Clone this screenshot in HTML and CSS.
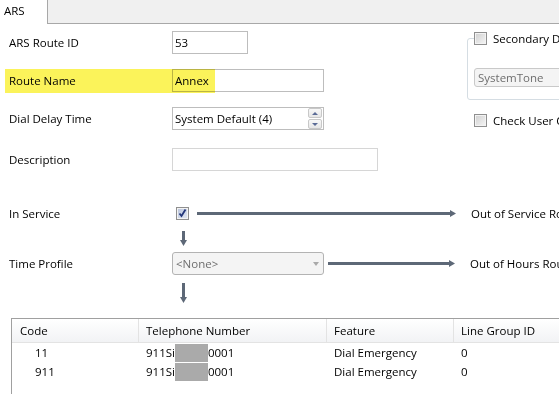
FILE: index.html
```html
<!DOCTYPE html>
<html lang="en">
<head>
    <meta charset="UTF-8">
    <title>ARS Route</title>
    <link rel="stylesheet" href="styles.css">
</head>
<body>
    <div class="tabs">
        <div class="tab">ARS</div>
        <div class="tab-rest"></div>
    </div>

    <div class="page">
        <div class="top">
            <div class="fields">
                <div class="row">
                    <span class="label">ARS Route ID</span>
                    <div class="box w-id">53</div>
                </div>

                <div class="row gap-15">
                    <span class="label">Route Name</span>
                    <div class="box w-name">Annex</div>
                    <span class="marker"></span>
                </div>

                <div class="row gap-15">
                    <span class="label">Dial Delay Time</span>
                    <div class="box w-name spin">
                        <span>System Default (4)</span>
                        <div class="spin-btns">
                            <span class="spin-btn up"></span>
                            <span class="spin-btn down"></span>
                        </div>
                    </div>
                </div>

                <div class="row gap-18">
                    <span class="label">Description</span>
                    <div class="box w-desc light"></div>
                </div>
            </div>

            <div class="side">
                <fieldset class="group">
                    <legend class="check-line"><span class="cb"></span>Secondary D</legend>
                    <div class="select small">SystemTone</div>
                </fieldset>
                <div class="check-line user-check"><span class="cb"></span>Check User C</div>
            </div>
        </div>

        <div class="flow">
            <div class="row">
                <span class="label">In Service</span>
                <span class="cb checked">
                    <svg width="11" height="11" viewBox="0 0 11 11"><path d="M2.5 5.5 L4.5 8 L8.5 1.5" fill="none" stroke="#23367a" stroke-width="1.8"/></svg>
                </span>
                <svg class="harrow long" width="259" height="9" viewBox="0 0 259 9"><rect x="0" y="3" width="254" height="3" fill="#5d6877"/><polygon points="253,1 259,4.5 253,8" fill="#5d6877"/></svg>
                <span class="target">Out of Service Ro</span>
            </div>

            <div class="varrow first">
                <svg width="7" height="15" viewBox="0 0 7 15"><rect x="2" y="0" width="3" height="10" fill="#5d6877"/><polygon points="0,9 7,9 3.5,15" fill="#5d6877"/></svg>
            </div>

            <div class="row gap-6">
                <span class="label">Time Profile</span>
                <div class="select w-name">&lt;None&gt;<span class="caret"></span></div>
                <svg class="harrow short" width="127" height="9" viewBox="0 0 127 9"><rect x="0" y="3" width="122" height="3" fill="#5d6877"/><polygon points="121,1 127,4.5 121,8" fill="#5d6877"/></svg>
                <span class="target">Out of Hours Rou</span>
            </div>

            <div class="varrow second">
                <svg width="7" height="20" viewBox="0 0 7 20"><rect x="2" y="0" width="3" height="15" fill="#5d6877"/><polygon points="0,14 7,14 3.5,20" fill="#5d6877"/></svg>
            </div>
        </div>

        <div class="grid">
            <div class="grid-head">
                <div class="c-code">Code</div>
                <div class="c-tel">Telephone Number</div>
                <div class="c-feat">Feature</div>
                <div class="c-line">Line Group ID</div>
            </div>
            <div class="grid-row">
                <div class="c-code num">11</div>
                <div class="c-tel">911Si<span class="hidden"></span>0001</div>
                <div class="c-feat">Dial Emergency</div>
                <div class="c-line">0</div>
            </div>
            <div class="grid-row">
                <div class="c-code num">911</div>
                <div class="c-tel">911Si<span class="hidden"></span>0001</div>
                <div class="c-feat">Dial Emergency</div>
                <div class="c-line">0</div>
            </div>
        </div>
    </div>
</body>
</html>
```

FILE: styles.css
```css
* {
    margin: 0;
    padding: 0;
    box-sizing: border-box;
}

body {
    width: 559px;
    height: 394px;
    overflow: hidden;
    background: #fff;
    color: #000;
    font-family: "Open Sans", "Noto Sans", sans-serif;
    font-size: 11.5px;
    white-space: nowrap;
}

.tabs {
    display: flex;
    height: 24px;
}

.tab {
    width: 47px;
    padding: 3px 0 0 4px;
    background: #fff;
}

.tab-rest {
    flex: 1;
    background: #f0f0f0;
    border-left: 1px solid #a8a8a8;
    border-bottom: 1px solid #a8a8a8;
}

.page {
    padding-left: 9px;
    overflow: hidden;
}

.top {
    display: flex;
}

.fields {
    width: 458px;
    flex-shrink: 0;
    padding-top: 7px;
}

.row {
    display: flex;
    align-items: center;
    height: 23px;
    position: relative;
}

.row > * {
    flex-shrink: 0;
}

.gap-6 { margin-top: 6px; }
.gap-15 { margin-top: 15px; }
.gap-18 { margin-top: 18px; }

.label {
    width: 163px;
}

.box {
    height: 23px;
    display: flex;
    align-items: center;
    padding-left: 2px;
    border: 1px solid #bdbdbd;
    background: #fff;
}

.box.light {
    border-color: #d6d6d6;
}

.w-id { width: 76px; }
.w-name { width: 152px; }
.w-desc { width: 206px; }

.marker {
    position: absolute;
    left: -4px;
    top: 0;
    width: 210px;
    height: 24px;
    background: #fbf35a;
    mix-blend-mode: multiply;
}

.spin {
    justify-content: space-between;
}

.spin-btns {
    display: flex;
    flex-direction: column;
    gap: 1px;
    margin-right: 1px;
}

.spin-btn {
    width: 14px;
    height: 10px;
    border: 1px solid #c8c8c8;
    border-radius: 2px;
    background: linear-gradient(#f8f8f8, #e6e6e6);
    display: flex;
    align-items: center;
    justify-content: center;
}

.spin-btn::before {
    content: "";
    border-left: 3px solid transparent;
    border-right: 3px solid transparent;
}

.spin-btn.up::before {
    border-bottom: 3px solid #5a6b96;
}

.spin-btn.down::before {
    border-top: 3px solid #5a6b96;
}

.side {
    flex: 1;
    min-width: 0;
    padding-top: 7px;
}

.group {
    width: 130px;
    height: 69px;
    padding: 0 0 11px 6px;
    border: 1px solid #d5dde3;
    border-radius: 3px;
}

.group legend {
    padding: 0 2px 0 0;
}

.check-line {
    display: flex;
    align-items: center;
    gap: 6px;
    height: 15px;
}

.user-check {
    margin: 13px 0 0 7px;
}

.cb {
    width: 13px;
    height: 13px;
    flex-shrink: 0;
    display: flex;
    align-items: center;
    justify-content: center;
    border: 1px solid #8f8f8f;
    background: linear-gradient(135deg, #cfcfcf, #f6f6f6);
    box-shadow: inset 0 0 0 1px #f3f3f3;
}

.cb.checked {
    margin-left: 4px;
    background: linear-gradient(135deg, #b9c4dc, #e3e8f3);
}

.select {
    height: 23px;
    display: flex;
    align-items: center;
    justify-content: space-between;
    padding: 0 4px 0 3px;
    border: 1px solid #b3b3b3;
    border-radius: 3px;
    background: #f4f4f4;
    color: #6e6e6e;
}

.select.small {
    width: 110px;
    height: 19px;
    margin-top: 22px;
    border-color: #c9c9c9;
}

.caret {
    border-left: 3.5px solid transparent;
    border-right: 3.5px solid transparent;
    border-top: 4px solid #a9a9a9;
}

.flow {
    padding-top: 31px;
}

.harrow.long {
    margin-left: 8px;
}

.harrow.short {
    margin-left: 4px;
}

.target {
    margin-left: 15px;
}

.varrow {
    padding-left: 171px;
    display: flex;
}

.varrow.first {
    height: 15px;
    margin-top: 6px;
}

.varrow.second {
    height: 20px;
    margin-top: 8px;
}

.grid {
    margin: 15px 0 0 2px;
    width: 560px;
    height: 80px;
    border-top: 1px solid #a0a0a0;
    border-left: 1px solid #a0a0a0;
}

.grid-head,
.grid-row {
    display: grid;
    grid-template-columns: 127px 188px 127px 1fr;
    align-items: center;
}

.grid-head {
    height: 24px;
    background: linear-gradient(#ffffff, #f2f3f5);
    border-bottom: 1px solid #e3e3e3;
}

.grid-head div {
    height: 23px;
    line-height: 23px;
    border-right: 1px solid #e3e3e3;
    padding-left: 7px;
}

.grid-head .c-code {
    padding-left: 8px;
}

.grid-row {
    height: 19px;
}

.grid-row div {
    padding-left: 7px;
    display: flex;
    align-items: center;
}

.grid-row .num {
    padding-left: 23px;
}

.hidden {
    display: inline-block;
    width: 33px;
    height: 18px;
    background: #aaaaaa;
}
```
